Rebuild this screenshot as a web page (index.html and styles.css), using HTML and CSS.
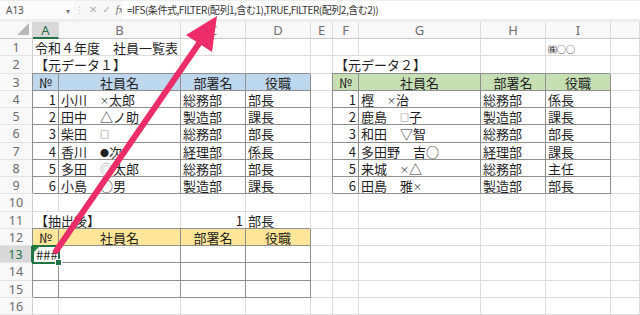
FILE: index.html
```html
<!DOCTYPE html>
<html lang="ja">
<head>
<meta charset="utf-8">
<title>社員一覧表</title>
<link rel="stylesheet" href="styles.css">
</head>
<body>
<div class="fbar">
  <div class="namebox"><span>A13</span><span class="dd">▾</span></div>
  <div class="icons"><span class="dots">⋮</span><span class="ic">✕</span><span class="ic">✓</span><span class="ic fx"><i>f</i>x</span></div>
  <div class="formula">=IFS(条件式,FILTER(配列1,含む1),TRUE,FILTER(配列2,含む2))</div>
</div>
<div class="g">
  <!-- column headers -->
  <div class="corner"><svg width="12" height="12" viewBox="0 0 12 12"><polygon points="12,0 12,12 0,12" fill="#b9b9b9"/></svg></div>
  <div class="ch selh">A</div><div class="ch">B</div><div class="ch">C</div><div class="ch">D</div><div class="ch">E</div><div class="ch">F</div><div class="ch">G</div><div class="ch">H</div><div class="ch">I</div><div class="ch"></div>
  <!-- row 1 -->
  <div class="rh">1</div><div class="c nr">令和４年度　社員一覧表</div><div class="c"></div><div class="c"></div><div class="c"></div><div class="c"></div><div class="c"></div><div class="c"></div><div class="c"></div><div class="c"><span class="tiny">㈱○○</span></div><div class="c"></div>
  <!-- row 2 -->
  <div class="rh">2</div><div class="c nr">【元データ１】</div><div class="c"></div><div class="c"></div><div class="c"></div><div class="c"></div><div class="c nr">【元データ２】</div><div class="c"></div><div class="c"></div><div class="c"></div><div class="c"></div>
  <!-- row 3 -->
  <div class="rh">3</div><div class="c t m hb">№</div><div class="c t m hb">社員名</div><div class="c t m hb">部署名</div><div class="c t m hb">役職</div><div class="c"></div><div class="c t m hg">№</div><div class="c t m hg">社員名</div><div class="c t m hg">部署名</div><div class="c t m hg">役職</div><div class="c"></div>
  <!-- row 4 -->
  <div class="rh">4</div><div class="c t r">1</div><div class="c t">小川　<span class="s">×</span>太郎</div><div class="c t">総務部</div><div class="c t">部長</div><div class="c"></div><div class="c t r">1</div><div class="c t">樫　<span class="s">×</span>治</div><div class="c t">総務部</div><div class="c t">係長</div><div class="c"></div>
  <!-- row 5 -->
  <div class="rh">5</div><div class="c t r">2</div><div class="c t">田中　△ノ助</div><div class="c t">製造部</div><div class="c t">課長</div><div class="c"></div><div class="c t r">2</div><div class="c t">鹿島　<span class="s">□</span>子</div><div class="c t">製造部</div><div class="c t">課長</div><div class="c"></div>
  <!-- row 6 -->
  <div class="rh">6</div><div class="c t r">3</div><div class="c t">柴田　<span class="s">□</span></div><div class="c t">総務部</div><div class="c t">部長</div><div class="c"></div><div class="c t r">3</div><div class="c t">和田　▽智</div><div class="c t">総務部</div><div class="c t">部長</div><div class="c"></div>
  <!-- row 7 -->
  <div class="rh">7</div><div class="c t r">4</div><div class="c t">香川　<span class="s">●</span>次</div><div class="c t">経理部</div><div class="c t">係長</div><div class="c"></div><div class="c t r">4</div><div class="c t">多田野　吉○</div><div class="c t">経理部</div><div class="c t">課長</div><div class="c"></div>
  <!-- row 8 -->
  <div class="rh">8</div><div class="c t r">5</div><div class="c t">多田　<span class="gray">◎</span>太郎</div><div class="c t">総務部</div><div class="c t">部長</div><div class="c"></div><div class="c t r">5</div><div class="c t">来城　<span class="s">×</span>△</div><div class="c t">総務部</div><div class="c t">主任</div><div class="c"></div>
  <!-- row 9 -->
  <div class="rh">9</div><div class="c t r">6</div><div class="c t">小島　○男</div><div class="c t">製造部</div><div class="c t">課長</div><div class="c"></div><div class="c t r">6</div><div class="c t">田島　雅<span class="s">×</span></div><div class="c t">製造部</div><div class="c t">部長</div><div class="c"></div>
  <!-- row 10 -->
  <div class="rh">10</div><div class="c"></div><div class="c"></div><div class="c"></div><div class="c"></div><div class="c"></div><div class="c"></div><div class="c"></div><div class="c"></div><div class="c"></div><div class="c"></div>
  <!-- row 11 -->
  <div class="rh">11</div><div class="c nr">【抽出後】</div><div class="c"></div><div class="c r">1</div><div class="c">部長</div><div class="c"></div><div class="c"></div><div class="c"></div><div class="c"></div><div class="c"></div><div class="c"></div>
  <!-- row 12 -->
  <div class="rh">12</div><div class="c t m hy">№</div><div class="c t m hy">社員名</div><div class="c t m hy">部署名</div><div class="c t m hy">役職</div><div class="c"></div><div class="c"></div><div class="c"></div><div class="c"></div><div class="c"></div><div class="c"></div>
  <!-- row 13 -->
  <div class="rh selr">13</div><div class="c t sel">###</div><div class="c t"></div><div class="c t"></div><div class="c t"></div><div class="c"></div><div class="c"></div><div class="c"></div><div class="c"></div><div class="c"></div><div class="c"></div>
  <!-- row 14 -->
  <div class="rh">14</div><div class="c t"></div><div class="c t"></div><div class="c t"></div><div class="c t"></div><div class="c"></div><div class="c"></div><div class="c"></div><div class="c"></div><div class="c"></div><div class="c"></div>
  <!-- row 15 -->
  <div class="rh">15</div><div class="c t"></div><div class="c t"></div><div class="c t"></div><div class="c t"></div><div class="c"></div><div class="c"></div><div class="c"></div><div class="c"></div><div class="c"></div><div class="c"></div>
  <!-- row 16 -->
  <div class="rh">16</div><div class="c"></div><div class="c"></div><div class="c"></div><div class="c"></div><div class="c"></div><div class="c"></div><div class="c"></div><div class="c"></div><div class="c"></div><div class="c"></div>
</div>
<svg class="arrow" width="640" height="315" viewBox="0 0 640 315">
  <line x1="56" y1="251" x2="200" y2="42" stroke="#ec2d69" stroke-width="6" stroke-linecap="round"/>
  <polygon points="217,16 186,35 212,52" fill="#ec2d69"/>
</svg>
</body>
</html>
```

FILE: styles.css
```css
html, body {
  margin: 0;
  padding: 0;
}
body {
  width: 640px;
  height: 315px;
  overflow: hidden;
  position: relative;
  background: #ffffff;
  font-family: "Noto Sans CJK JP", "Noto Sans", sans-serif;
  color: #1f1f1f;
}

/* formula bar */
.fbar {
  height: 22px;
  box-sizing: border-box;
  padding-top: 1px;
  display: flex;
  align-items: flex-start;
  background: #eeeeee;
}
.namebox {
  width: 73px;
  height: 18px;
  box-sizing: border-box;
  background: #fbfbfb;
  display: flex;
  align-items: center;
  justify-content: space-between;
  padding: 0 3px 0 6px;
  font-family: "Noto Sans", sans-serif;
  font-size: 10px;
  color: #555;
}
.dd {
  font-size: 8px;
  color: #777;
}
.icons {
  width: 49px;
  height: 18px;
  display: flex;
  align-items: center;
  gap: 5px;
  padding-left: 2px;
  box-sizing: border-box;
  color: #b0b0b0;
  font-family: "DejaVu Sans", sans-serif;
  font-size: 10px;
  background: #f7f7f7;
}
.dots {
  color: #c8c8c8;
  font-size: 9px;
}
.ic {
  line-height: 1;
}
.fx {
  color: #666;
  font-family: "Liberation Serif", serif;
  font-size: 10px;
}
.formula {
  flex: 1;
  height: 18px;
  box-sizing: border-box;
  background: #ffffff;
  padding-left: 5px;
  font-size: 10px;
  line-height: 18px;
  letter-spacing: -0.45px;
  color: #333;
  white-space: nowrap;
}

/* sheet grid */
.g {
  display: grid;
  grid-template-columns: 33px 26px 122px 65px 65px 22px 26px 122px 65px 65px 1fr;
  grid-template-rows: 17px repeat(16, 17.25px);
}
.corner {
  background: #f8f8f8;
  border-right: 1px solid #d6d6d6;
  border-bottom: 1px solid #c9c9c9;
  display: flex;
  align-items: flex-end;
  justify-content: flex-end;
  padding: 0 3px 3px 0;
  box-sizing: border-box;
}
.ch {
  background: #f8f8f8;
  border-right: 1px solid #dcdcdc;
  border-bottom: 1px solid #c9c9c9;
  box-sizing: border-box;
  text-align: center;
  font-family: "Noto Sans", sans-serif;
  font-size: 13px;
  line-height: 16px;
  color: #707070;
}
.selh {
  background: #d9d9d9;
  color: #217346;
  border-bottom: 2px solid #217346;
}
.rh {
  background: #f8f8f8;
  border-right: 1px solid #d0d0d0;
  border-bottom: 1px solid #e3e3e3;
  box-sizing: border-box;
  text-align: center;
  font-family: "Noto Sans", sans-serif;
  font-size: 12.5px;
  line-height: 17px;
  color: #6c6c6c;
}
.selr {
  background: #d9d9d9;
  color: #217346;
  border-right: 2px solid #217346;
}
.c {
  border-right: 1px solid #dddddd;
  border-bottom: 1px solid #dddddd;
  box-sizing: border-box;
  padding: 0 2px;
  font-size: 13px;
  line-height: 17px;
  white-space: nowrap;
  overflow: visible;
  min-width: 0;
}
.nr {
  border-right-color: transparent;
}
.t {
  border-right-color: #8f8f8f;
  border-bottom-color: #8f8f8f;
  box-shadow: -1px -1px 0 0 #8f8f8f;
}
.r {
  text-align: right;
}
.m {
  text-align: center;
}
.hb {
  background: #bdd7ee;
}
.hg {
  background: #c6e0b4;
}
.hy {
  background: #ffe699;
}
.s {
  font-size: 9px;
  vertical-align: 1px;
}
.gray {
  color: #a8a8a8;
}
.tiny {
  font-size: 9px;
  color: #333;
}
.sel {
  position: relative;
  outline: 2px solid #217346;
  outline-offset: -1px;
  z-index: 2;
  padding-left: 3px;
}
.sel::before {
  content: "";
  position: absolute;
  left: 1px;
  top: 1px;
  border-top: 5px solid #2a8a3c;
  border-right: 5px solid transparent;
}
.sel::after {
  content: "";
  position: absolute;
  right: -4px;
  bottom: -4px;
  width: 5px;
  height: 5px;
  background: #217346;
  border: 1px solid #ffffff;
}

.arrow {
  position: absolute;
  left: 0;
  top: 0;
  z-index: 10;
  pointer-events: none;
}
```
